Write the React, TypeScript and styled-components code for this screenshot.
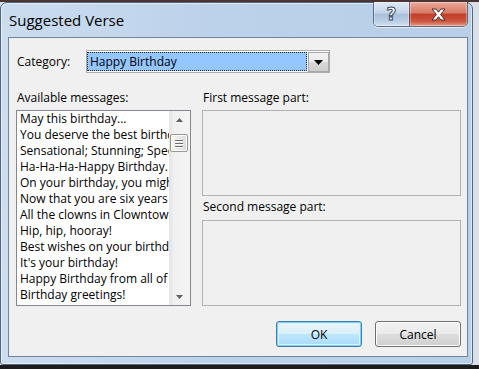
import React from 'react'
import styled, { createGlobalStyle } from 'styled-components'

const GlobalStyle = createGlobalStyle`
  html, body {
    margin: 0;
    padding: 0;
  }
  body {
    width: 479px;
    height: 369px;
    overflow: hidden;
    background: linear-gradient(
      to bottom,
      #4a3434 0,
      #4a3434 2px,
      #d9dfe6 2px,
      #d9dfe6 365px,
      #1c1c1c 365px
    );
    font-family: 'Open Sans', 'Noto Sans', sans-serif;
    font-size: 12px;
    color: #000;
  }
`

const messages = [
  'May this birthday...',
  'You deserve the best birthday ever',
  'Sensational; Stunning; Spectacular',
  'Ha-Ha-Ha-Happy Birthday.',
  'On your birthday, you might',
  'Now that you are six years old',
  'All the clowns in Clowntown',
  'Hip, hip, hooray!',
  'Best wishes on your birthday',
  "It's your birthday!",
  'Happy Birthday from all of us',
  'Birthday greetings!',
]

const Window = styled.div`
  margin-top: 2px;
  width: 473px;
  height: 363px;
  box-sizing: border-box;
  border: 1px solid #4f6580;
  border-radius: 7px 7px 3px 3px;
  background: linear-gradient(to right, #cbdcef 0%, #bcd2ea 45%, #b8cfe8 100%);
  box-shadow: inset 0 0 0 1px rgba(255, 255, 255, 0.55);
  padding: 0 4px 7px 7px;
  display: flex;
  flex-direction: column;
`

const TitleBar = styled.div`
  height: 34px;
  display: flex;
  align-items: flex-start;
`

const Title = styled.div`
  margin: 7px 0 0 1px;
  font-size: 15px;
  line-height: 20px;
  color: #000;
`

const CaptionGroup = styled.div`
  margin-left: auto;
  margin-top: -1px;
  display: flex;
  border: 1px solid rgba(30, 40, 60, 0.6);
  border-top: none;
  border-radius: 0 0 5px 5px;
  overflow: hidden;
  box-shadow: 0 1px 0 rgba(255, 255, 255, 0.6);
`

const CaptionButton = styled.div<{ $close?: boolean }>`
  width: ${(p) => (p.$close ? 57 : 35)}px;
  height: 24px;
  display: flex;
  align-items: center;
  justify-content: center;
  box-shadow: inset 0 0 0 1px rgba(255, 255, 255, 0.35);
  border-left: ${(p) => (p.$close ? '1px solid rgba(30, 40, 60, 0.5)' : 'none')};
  background: ${(p) =>
    p.$close
      ? 'linear-gradient(to bottom, #e9ab9c 0%, #d87a66 45%, #c23e28 52%, #cc5640 80%, #e69a86 100%)'
      : 'linear-gradient(to bottom, #dfe9f5 0%, #c3d4e8 45%, #a9c0dc 52%, #b9cde4 80%, #d4e2f1 100%)'};
`

const HelpGlyph = styled.span`
  font-family: 'DejaVu Sans', sans-serif;
  font-weight: bold;
  font-size: 17px;
  line-height: 20px;
  color: #fff;
  -webkit-text-stroke: 1px #3a4a60;
`

const Client = styled.div`
  flex: 1;
  border: 1px solid #70849c;
  background: #f0f0f0;
  padding: 12px 6px 9px 7px;
  display: flex;
  flex-direction: column;
`

const CategoryRow = styled.div`
  display: flex;
  align-items: center;
  height: 23px;
`

const CategoryLabel = styled.div`
  width: 69px;
  margin-left: 1px;
`

const Combo = styled.div`
  width: 244px;
  height: 23px;
  box-sizing: border-box;
  border: 1px solid #acacac;
  background: #fff;
  padding: 1px 0 0 0;
  display: flex;
`

const ComboValue = styled.div`
  flex: 1;
  height: 19px;
  box-sizing: border-box;
  border: 1px dotted #222;
  background: #94c6ff;
  padding-left: 2px;
  line-height: 17px;
`

const ComboButton = styled.div`
  width: 21px;
  height: 20px;
  margin-left: 1px;
  box-sizing: border-box;
  border: 1px solid #a7a7a7;
  background: linear-gradient(to bottom, #f3f3f3 0%, #e9e9e9 50%, #d9d9d9 51%, #cdcdcd 100%);
  display: flex;
  align-items: center;
  justify-content: center;
`

const Panels = styled.div`
  margin-top: 17px;
  display: grid;
  grid-template-columns: 175px 259px;
  column-gap: 11px;
`

const Column = styled.div`
  display: flex;
  flex-direction: column;
`

const FieldLabel = styled.div<{ $gap?: number }>`
  height: 16px;
  line-height: 16px;
  padding-left: 1px;
  margin-top: ${(p) => p.$gap ?? 0}px;
  margin-bottom: ${(p) => (p.$gap ? 5 : 4)}px;
`

const ListBox = styled.div`
  height: 196px;
  box-sizing: border-box;
  border: 1px solid #828790;
  background: #fff;
  display: flex;
`

const Items = styled.div`
  flex: 1;
  min-width: 0;
  overflow: hidden;
  padding-left: 3px;
`

const Item = styled.div`
  height: 16px;
  line-height: 16px;
  white-space: nowrap;
`

const ScrollBar = styled.div`
  width: 21px;
  display: flex;
  flex-direction: column;
  background: linear-gradient(to right, #e3e3e3 0%, #f1f1f1 25%, #f4f4f4 100%);
`

const ArrowBox = styled.div`
  height: 17px;
  display: flex;
  align-items: center;
  justify-content: center;
`

const Track = styled.div`
  flex: 1;
`

const Thumb = styled.div`
  margin: 6px 2px 0 1px;
  height: 18px;
  box-sizing: border-box;
  border: 1px solid #979797;
  border-radius: 2px;
  background: linear-gradient(to right, #f6f6f6 0%, #e8e8e8 55%, #dadada 100%);
  box-shadow: inset 0 0 0 1px #fdfdfd;
  display: flex;
  flex-direction: column;
  align-items: center;
  justify-content: center;
  gap: 2px;
`

const Grip = styled.div`
  width: 8px;
  height: 1px;
  background: #6f6f6f;
  box-shadow: 0 1px 0 #fff;
`

const MessageBox = styled.div`
  height: 86px;
  box-sizing: border-box;
  border: 1px solid #b1b1b1;
  background: #f0f0f0;
`

const ButtonRow = styled.div`
  margin-top: auto;
  display: flex;
  justify-content: flex-end;
  gap: 13px;
`

const DialogButton = styled.div<{ $default?: boolean }>`
  width: 86px;
  height: 26px;
  box-sizing: border-box;
  border-radius: 3px;
  display: flex;
  align-items: center;
  justify-content: center;
  border: 1px solid ${(p) => (p.$default ? '#3c7fb1' : '#707070')};
  background: ${(p) =>
    p.$default
      ? 'linear-gradient(to bottom, #eaf6fd 0%, #d9f0fc 48%, #bee6fd 52%, #a9daf5 100%)'
      : 'linear-gradient(to bottom, #f2f2f2 0%, #ebebeb 48%, #dddddd 52%, #cfcfcf 100%)'};
  box-shadow: ${(p) =>
    p.$default ? 'inset 0 0 0 1px #7fd0f3, inset 0 0 0 2px #dff3fc' : 'inset 0 0 0 1px #fcfcfc'};
`

const Arrow = ({ down }: { down?: boolean }) => (
  <svg width="7" height="4" viewBox="0 0 7 4">
    <path d={down ? 'M0 0 H7 L3.5 4 Z' : 'M0 4 H7 L3.5 0 Z'} fill="#606060" />
  </svg>
)

export default function App() {
  return (
    <>
      <GlobalStyle />
      <Window>
        <TitleBar>
          <Title>Suggested Verse</Title>
          <CaptionGroup>
            <CaptionButton>
              <HelpGlyph>?</HelpGlyph>
            </CaptionButton>
            <CaptionButton $close>
              <svg width="15" height="13" viewBox="0 0 15 13">
                <path
                  d="M1 1 H5 L7.5 4.2 L10 1 H14 L9.6 6.5 L14 12 H10 L7.5 8.8 L5 12 H1 L5.4 6.5 Z"
                  fill="#fff"
                  stroke="#4a2a2a"
                  strokeWidth="1"
                  strokeLinejoin="round"
                />
              </svg>
            </CaptionButton>
          </CaptionGroup>
        </TitleBar>
        <Client>
          <CategoryRow>
            <CategoryLabel>Category:</CategoryLabel>
            <Combo>
              <ComboValue>Happy Birthday</ComboValue>
              <ComboButton>
                <svg width="9" height="5" viewBox="0 0 9 5">
                  <path d="M0 0 H9 L4.5 5 Z" fill="#000" />
                </svg>
              </ComboButton>
            </Combo>
          </CategoryRow>
          <Panels>
            <Column>
              <FieldLabel>Available messages:</FieldLabel>
              <ListBox>
                <Items>
                  {messages.map((m) => (
                    <Item key={m}>{m}</Item>
                  ))}
                </Items>
                <ScrollBar>
                  <ArrowBox>
                    <Arrow />
                  </ArrowBox>
                  <Track>
                    <Thumb>
                      <Grip />
                      <Grip />
                      <Grip />
                    </Thumb>
                  </Track>
                  <ArrowBox>
                    <Arrow down />
                  </ArrowBox>
                </ScrollBar>
              </ListBox>
            </Column>
            <Column>
              <FieldLabel>First message part:</FieldLabel>
              <MessageBox />
              <FieldLabel $gap={3}>Second message part:</FieldLabel>
              <MessageBox />
            </Column>
          </Panels>
          <ButtonRow>
            <DialogButton $default>OK</DialogButton>
            <DialogButton>Cancel</DialogButton>
          </ButtonRow>
        </Client>
      </Window>
    </>
  )
}
